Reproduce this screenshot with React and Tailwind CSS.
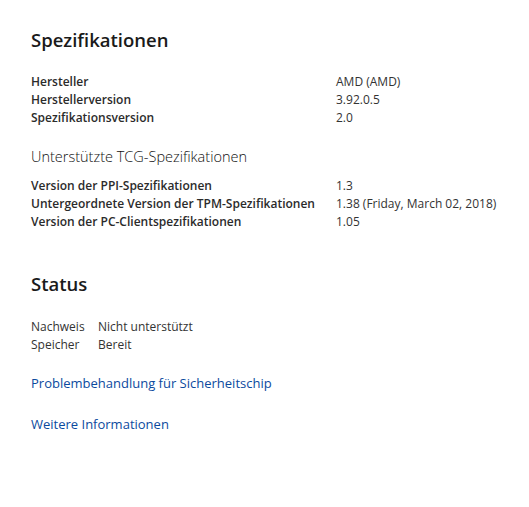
import React from "react";

const specs = [
  { label: "Hersteller", value: "AMD (AMD)" },
  { label: "Herstellerversion", value: "3.92.0.5" },
  { label: "Spezifikationsversion", value: "2.0" },
];

const tcg = [
  { label: "Version der PPI-Spezifikationen", value: "1.3" },
  { label: "Untergeordnete Version der TPM-Spezifikationen", value: "1.38 (Friday, March 02, 2018)" },
  { label: "Version der PC-Clientspezifikationen", value: "1.05" },
];

const status = [
  { label: "Nachweis", value: "Nicht unterstützt" },
  { label: "Speicher", value: "Bereit" },
];

const Rows = ({ rows, labelWidth, bold = true }) => (
  <div className="flex flex-col">
    {rows.map((r) => (
      <div key={r.label} className="flex h-[18px] items-center text-[12px] leading-[18px]">
        <span
          className={`${labelWidth} shrink-0 ${bold ? "font-semibold text-[#2b2b2b]" : "text-[#333]"}`}
        >
          {r.label}
        </span>
        <span className="text-[#333]">{r.value}</span>
      </div>
    ))}
  </div>
);

export default function App() {
  return (
    <div
      className="h-[507px] w-[529px] bg-white pl-[31px] pt-[27px]"
      style={{ fontFamily: '"Open Sans", "Noto Sans", sans-serif' }}
    >
      <h1 className="text-[18.5px] font-semibold leading-[26px] text-[#1a1a1a]">Spezifikationen</h1>

      <div className="mt-[20px]">
        <Rows rows={specs} labelWidth="w-[305px]" />
      </div>

      <h2 className="mt-[20px] text-[14.5px] font-light leading-[20px] text-[#111]">
        Unterstützte TCG-Spezifikationen
      </h2>

      <div className="mt-[10px]">
        <Rows rows={tcg} labelWidth="w-[305px]" />
      </div>

      <h1 className="mt-[40px] text-[18.5px] font-semibold leading-[26px] text-[#1a1a1a]">Status</h1>

      <div className="mt-[21px]">
        <Rows rows={status} labelWidth="w-[67px]" bold={false} />
      </div>

      <div className="mt-[20px] flex flex-col gap-[23px] text-[13px] leading-[18px] text-[#0b4a9e]">
        <a href="#">Problembehandlung für Sicherheitschip</a>
        <a href="#">Weitere Informationen</a>
      </div>
    </div>
  );
}
